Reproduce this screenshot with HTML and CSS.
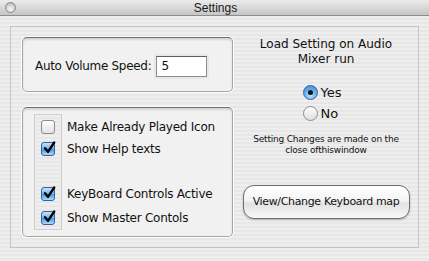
FILE: index.html
```html
<!DOCTYPE html>
<html lang="en">
<head>
  <meta charset="UTF-8" />
  <title>Settings</title>
  <link rel="stylesheet" href="styles.css">
</head>
<body>
  <div class="window">
    <div class="titlebar">
      <span class="close-btn"></span>
      <span class="title">Settings</span>
    </div>

    <div class="content">
      <div class="panel">
        <div class="left-col">
          <div class="group group-speed">
            <label class="speed-label">Auto Volume Speed:</label>
            <div class="text-field">5</div>
          </div>

          <div class="group group-options">
            <div class="check-col">
              <div class="row"><span class="checkbox"></span></div>
              <div class="row"><span class="checkbox checked"><svg viewBox="0 0 14 14"><path d="M3 7.2 L6 10.8 L12.2 1.5" /></svg></span></div>
              <div class="row row-gap"><span class="checkbox checked"><svg viewBox="0 0 14 14"><path d="M3 7.2 L6 10.8 L12.2 1.5" /></svg></span></div>
              <div class="row row-last"><span class="checkbox checked"><svg viewBox="0 0 14 14"><path d="M3 7.2 L6 10.8 L12.2 1.5" /></svg></span></div>
            </div>
            <div class="label-col">
              <div class="row">Make Already Played Icon</div>
              <div class="row">Show Help texts</div>
              <div class="row row-gap">KeyBoard Controls Active</div>
              <div class="row row-last">Show Master Contols</div>
            </div>
          </div>
        </div>

        <div class="right-col">
          <div class="load-title">Load Setting on Audio<br>Mixer run</div>
          <div class="radios">
            <div class="radio-row"><span class="radio on"></span>Yes</div>
            <div class="radio-row"><span class="radio"></span>No</div>
          </div>
          <div class="note">Setting Changes are made on the<br>close ofthiswindow</div>
          <button class="aqua-btn">View/Change Keyboard map</button>
        </div>
      </div>
    </div>
  </div>
</body>
</html>
```

FILE: styles.css
```css
* { margin: 0; padding: 0; box-sizing: border-box; }

html, body {
  width: 429px;
  height: 261px;
  overflow: hidden;
  font-family: "DejaVu Sans", "Liberation Sans", sans-serif;
  color: #111;
}

.window {
  width: 429px;
  height: 261px;
  background: repeating-linear-gradient(to bottom, #eeeeee 0, #eeeeee 2px, #e7e7e7 2px, #e7e7e7 4px);
}

.titlebar {
  height: 16px;
  position: relative;
  background: linear-gradient(to bottom, #ececec, #d4d4d4 60%, #c6c6c6);
  border-bottom: 1px solid #8c8c8c;
  display: flex;
  justify-content: center;
  align-items: center;
}

.close-btn {
  position: absolute;
  left: 5px;
  top: 2px;
  width: 11px;
  height: 11px;
  border-radius: 50%;
  border: 1px solid #8a8a8a;
  background: radial-gradient(circle at 50% 70%, #fafafa, #c4c4c4 70%, #a5a5a5);
}

.title {
  font-family: "Liberation Sans", sans-serif;
  font-size: 12px;
  color: #1a1a1a;
  margin-left: 2px;
}

.content {
  padding: 10px 10px 13px 10px;
}

.panel {
  height: 222px;
  border: 1px solid #c4c4c4;
  display: flex;
}

.left-col {
  width: 223px;
  padding: 10px 0 0 11px;
  display: flex;
  flex-direction: column;
  gap: 15px;
}

.group {
  width: 211px;
  border: 1px solid #a6a6a6;
  border-top-color: #6f6f6f;
  border-radius: 5px;
  background: #f1f1f1;
  box-shadow: 0 0 0 1px #fdfdfd, inset 0 2px 2px rgba(0, 0, 0, 0.12);
}

.group-speed {
  height: 55px;
  display: flex;
  align-items: center;
  padding: 3px 0 0 12px;
}

.speed-label {
  font-size: 12px;
  letter-spacing: -0.3px;
  margin-right: 5px;
}

.text-field {
  width: 51px;
  height: 21px;
  background: #fff;
  border: 1px solid #8c8c8c;
  border-top-color: #5e5e5e;
  box-shadow: 0 0 0 2px #e8e8e8;
  font-size: 12px;
  padding: 2px 0 0 4px;
}

.group-options {
  height: 130px;
  display: flex;
  padding: 6px 0 0 11px;
}

.check-col {
  width: 28px;
  height: 116px;
  border: 1px solid #cfcfcf;
  padding-left: 6px;
  background: repeating-linear-gradient(to bottom, #eeeeee 0, #eeeeee 2px, #e7e7e7 2px, #e7e7e7 4px);
}

.label-col {
  padding-left: 5px;
  font-size: 12px;
  letter-spacing: -0.25px;
}

.row {
  height: 22px;
  display: flex;
  align-items: center;
}

.check-col .row:first-child { margin-top: 1px; }
.label-col .row:first-child { margin-top: 2px; }

.row-gap { margin-top: 23px; }
.row-last { margin-top: 2px; }

.checkbox {
  width: 14px;
  height: 14px;
  border: 1px solid #8a8a8a;
  border-radius: 3px;
  background: linear-gradient(to bottom, #ffffff, #e2e2e2);
  position: relative;
}

.checkbox.checked {
  border-color: #3b5f9a;
  background: linear-gradient(to bottom, #c7e2fb, #6cb2ee 50%, #4a9be6 55%, #a9dbff);
}

.checkbox svg {
  position: absolute;
  left: 0;
  top: -2px;
  width: 14px;
  height: 14px;
  overflow: visible;
}

.checkbox svg path {
  fill: none;
  stroke: #000;
  stroke-width: 2.4;
  stroke-linecap: round;
  stroke-linejoin: round;
}

.right-col {
  flex: 1;
  display: flex;
  flex-direction: column;
  align-items: center;
  padding-top: 10px;
}

.load-title {
  font-size: 12px;
  text-align: center;
  line-height: 15px;
  color: #111;
}

.radios {
  margin-top: 17px;
  display: flex;
  flex-direction: column;
  gap: 5px;
  margin-left: -8px;
}

.radio-row {
  display: flex;
  align-items: center;
  font-size: 13px;
  height: 16px;
}

.radio {
  width: 15px;
  height: 15px;
  border-radius: 50%;
  border: 1px solid #8a8a8a;
  background: linear-gradient(to bottom, #ffffff, #dedede);
  margin-right: 3px;
  position: relative;
}

.radio.on {
  border-color: #3b5f9a;
  background: radial-gradient(circle at 50% 75%, #b8e0ff, #5aa6ea 60%, #3c86d4);
}

.radio.on::after {
  content: "";
  position: absolute;
  left: 4px;
  top: 4px;
  width: 5px;
  height: 5px;
  border-radius: 50%;
  background: #111;
}

.note {
  margin-top: 13px;
  font-size: 9px;
  text-align: center;
  line-height: 11px;
  letter-spacing: -0.2px;
}

.aqua-btn {
  margin-top: 29px;
  width: 167px;
  height: 34px;
  border-radius: 11px;
  border: 1px solid #6d6d6d;
  background: linear-gradient(to bottom, #ffffff 0, #f4f4f4 45%, #e2e2e2 55%, #f8f8f8 100%);
  box-shadow: 0 1px 2px rgba(0, 0, 0, 0.25);
  font-family: "DejaVu Sans", sans-serif;
  font-size: 11px;
  letter-spacing: -0.35px;
  padding-bottom: 2px;
  color: #111;
}
```
